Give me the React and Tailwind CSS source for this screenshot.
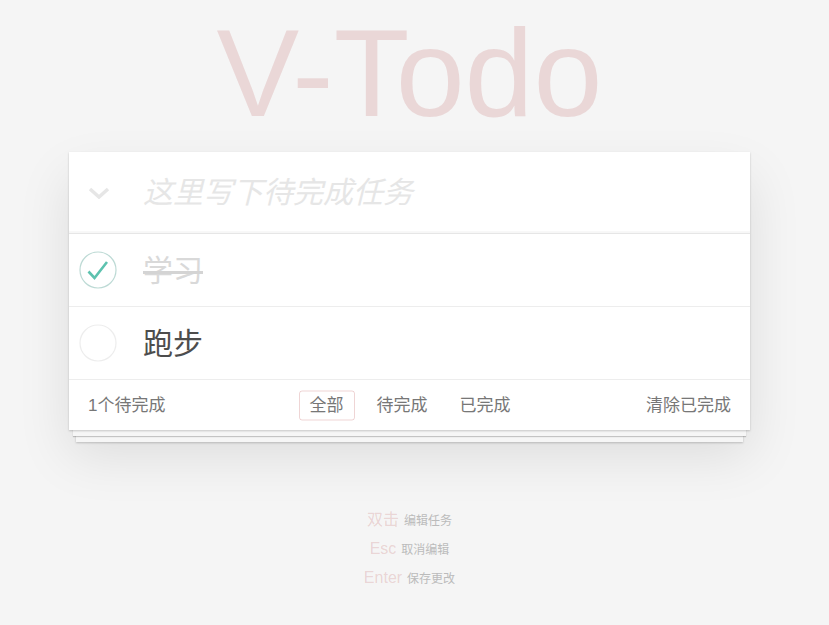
import React from 'react';

const font = "font-['Liberation_Sans','Noto_Sans_CJK_SC',sans-serif]";

const Circle = ({ done }) => (
  <svg width="40" height="40" viewBox="0 0 40 40" className="shrink-0">
    <circle cx="20" cy="20" r="18" fill="none" stroke={done ? '#bddad5' : '#ededed'} strokeWidth="1.2" />
    {done && <path d="M10.5 21.5 L16.5 28 L29 12" fill="none" stroke="#5dc2af" strokeWidth="2.6" />}
  </svg>
);

const TodoItem = ({ text, done }) => (
  <li className="flex h-[73px] items-center border-b border-[#ededed] pl-[9px]">
    <Circle done={done} />
    <span
      className={
        done
          ? 'ml-[25px] text-[30px] text-[#d9d9d9] line-through decoration-[#d4d4d4]'
          : 'ml-[25px] text-[30px] text-[#4d4d4d]'
      }
    >
      {text}
    </span>
  </li>
);

const App = () => {
  const todos = [
    { text: '学习', done: true },
    { text: '跑步', done: false },
  ];

  return (
    <div className={`min-h-screen bg-[#f5f5f5] pr-[10px] ${font}`}>
      <div className="flex flex-col items-center pt-[10px]">
        <h1 className="text-[124px] leading-[126px] text-[rgba(175,47,47,0.15)]">V-Todo</h1>

        <section className="relative mt-[16px] w-[681px] bg-white shadow-[0_1px_2px_0_rgba(0,0,0,0.2),0_10px_0_-4px_#f6f6f6,0_11px_1px_-4px_rgba(0,0,0,0.2),0_19px_0_-7px_#f6f6f6,0_20px_2px_-7px_rgba(0,0,0,0.2),0_25px_50px_0_rgba(0,0,0,0.1)]">
          <div className="flex h-[82px] items-center border-b border-[#e6e6e6] shadow-[inset_0_-2px_1px_rgba(0,0,0,0.03)]">
            <svg width="22" height="12" viewBox="0 0 22 12" className="ml-[19px]">
              <polyline points="2,2 11,10 20,2" fill="none" stroke="#e6e6e6" strokeWidth="3.5" />
            </svg>
            <span className="ml-[33px] text-[30px] italic text-[#e6e6e6]">这里写下待完成任务</span>
          </div>

          <ul>
            {todos.map((t) => (
              <TodoItem key={t.text} text={t.text} done={t.done} />
            ))}
          </ul>

          <footer className="relative flex h-[50px] items-center justify-between px-[19px] pt-[1px] text-[17px] text-[#777]">
            <span>1个待完成</span>
            <div className="absolute left-1/2 top-1/2 flex -translate-x-1/2 -translate-y-1/2 gap-[12px] pt-[1px]">
              <span className="rounded-[3px] border border-[rgba(175,47,47,0.2)] px-[10px] leading-[28px]">全部</span>
              <span className="border border-transparent px-[9px] leading-[28px]">待完成</span>
              <span className="border border-transparent px-[9px] leading-[28px]">已完成</span>
            </div>
            <span>清除已完成</span>
          </footer>
        </section>

        <div className="mt-[76px] flex flex-col items-center leading-[28px]">
          <p>
            <span className="text-[16px] text-[rgba(175,47,47,0.18)]">双击</span>
            <span className="ml-[5px] text-[12px] text-[#bbb]">编辑任务</span>
          </p>
          <p>
            <span className="text-[16px] text-[rgba(175,47,47,0.18)]">Esc</span>
            <span className="ml-[5px] text-[12px] text-[#bbb]">取消编辑</span>
          </p>
          <p>
            <span className="text-[16px] text-[rgba(175,47,47,0.18)]">Enter</span>
            <span className="ml-[5px] text-[12px] text-[#bbb]">保存更改</span>
          </p>
        </div>
      </div>
    </div>
  );
};

export default App;
